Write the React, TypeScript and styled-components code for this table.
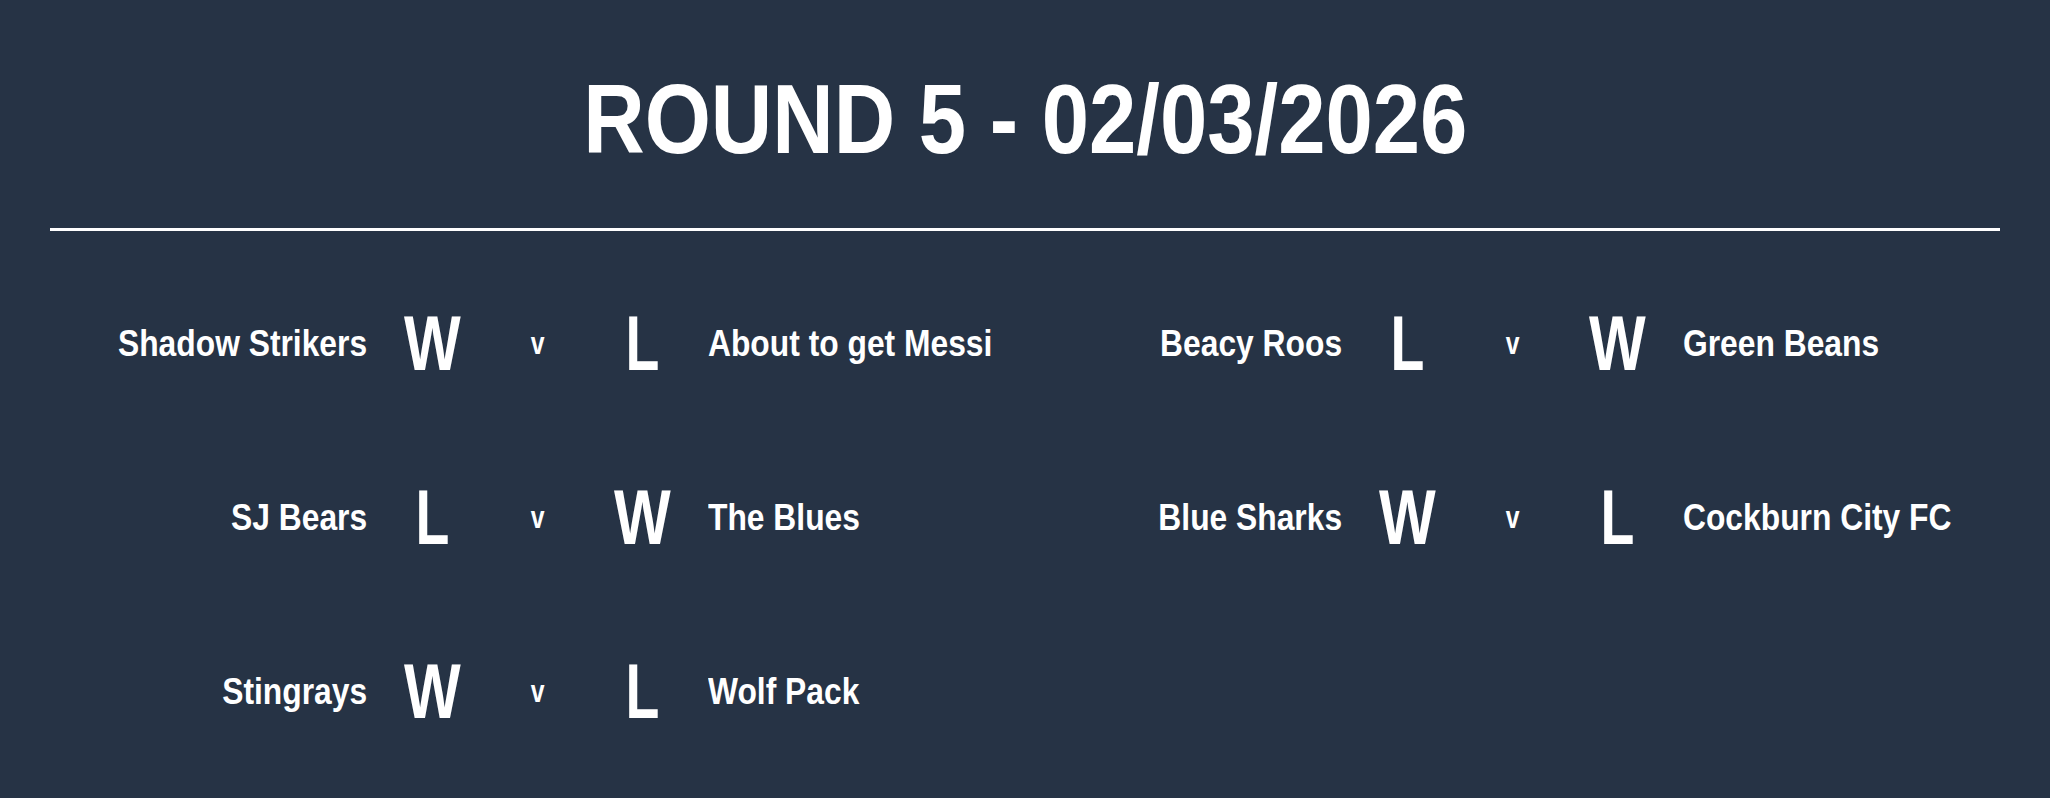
import styled, { createGlobalStyle } from "styled-components";

const GlobalStyle = createGlobalStyle`
  html, body {
    margin: 0;
    padding: 0;
    background: #263345;
  }
  body {
    font-family: "Liberation Sans", Arial, sans-serif;
    color: #ffffff;
  }
`;

const Page = styled.div`
  min-height: 798px;
  padding: 70px 50px 0;
  box-sizing: border-box;
  background: #263345;
`;

const Title = styled.h1`
  margin: 0;
  text-align: center;
  font-size: 98px;
  line-height: 1;
  font-weight: 700;
`;

// the reference uses a narrow DIN-style face, so the wide fallback is squeezed
interface SqueezeProps {
  scale: number;
  origin: "left" | "center" | "right";
}

const Squeeze = styled.span<SqueezeProps>`
  display: inline-block;
  white-space: nowrap;
  transform: scaleX(${(props) => props.scale});
  transform-origin: ${(props) => props.origin} center;
`;

const Divider = styled.hr`
  margin: 60px 0 0;
  border: 0;
  height: 3px;
  background: #ffffff;
`;

const Fixtures = styled.div`
  display: grid;
  grid-template-columns: minmax(0, 1fr) minmax(0, 1fr);
  row-gap: 97px;
  margin-top: 74px;
`;

const Match = styled.div`
  display: grid;
  grid-template-columns: minmax(0, 1fr) 90px 80px 90px minmax(0, 1fr);
  column-gap: 20px;
  align-items: center;
`;

interface TeamProps {
  side: "home" | "away";
}

const Team = styled.div<TeamProps>`
  font-size: 36px;
  font-weight: 700;
  line-height: 1;
  white-space: nowrap;
  text-align: ${(props) => (props.side === "home" ? "right" : "left")};
`;

const Result = styled.div`
  font-size: 77px;
  font-weight: 700;
  line-height: 1;
  text-align: center;
`;

const Versus = styled.div`
  font-size: 31px;
  font-weight: 700;
  line-height: 1;
  text-align: center;
`;

interface Fixture {
  home: string;
  homeResult: string;
  away: string;
  awayResult: string;
}

const fixtures: Fixture[] = [
  { home: "Shadow Strikers", homeResult: "W", away: "About to get Messi", awayResult: "L" },
  { home: "Beacy Roos", homeResult: "L", away: "Green Beans", awayResult: "W" },
  { home: "SJ Bears", homeResult: "L", away: "The Blues", awayResult: "W" },
  { home: "Blue Sharks", homeResult: "W", away: "Cockburn City FC", awayResult: "L" },
  { home: "Stingrays", homeResult: "W", away: "Wolf Pack", awayResult: "L" },
];

const resultScale = (r: string) => (r === "W" ? 0.78 : 0.72);

export default function App() {
  return (
    <>
      <GlobalStyle />
      <Page>
        <Title>
          <Squeeze scale={0.868} origin="center">
            ROUND 5 - 02/03/2026
          </Squeeze>
        </Title>
        <Divider />
        <Fixtures>
          {fixtures.map((f) => (
            <Match key={f.home}>
              <Team side="home">
                <Squeeze scale={0.883} origin="right">
                  {f.home}
                </Squeeze>
              </Team>
              <Result>
                <Squeeze scale={resultScale(f.homeResult)} origin="center">
                  {f.homeResult}
                </Squeeze>
              </Result>
              <Versus>
                <Squeeze scale={0.8} origin="center">
                  v
                </Squeeze>
              </Versus>
              <Result>
                <Squeeze scale={resultScale(f.awayResult)} origin="center">
                  {f.awayResult}
                </Squeeze>
              </Result>
              <Team side="away">
                <Squeeze scale={0.883} origin="left">
                  {f.away}
                </Squeeze>
              </Team>
            </Match>
          ))}
        </Fixtures>
      </Page>
    </>
  );
}
